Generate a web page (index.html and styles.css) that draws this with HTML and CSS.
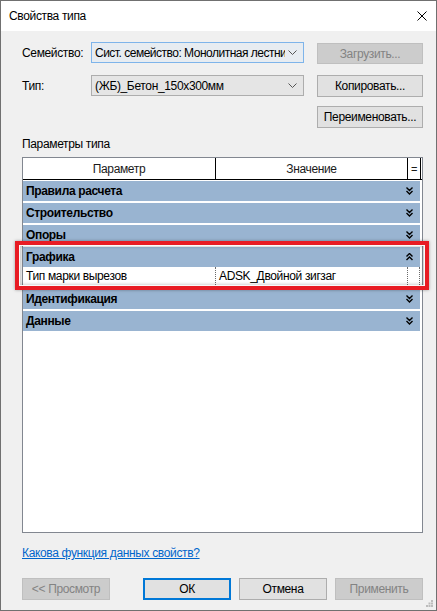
FILE: index.html
```html
<!DOCTYPE html>
<html lang="ru">

<head>
  <meta charset="UTF-8">
  <title>Свойства типа</title>
  <link rel="stylesheet" href="styles.css">
</head>

<body>
  <div class="dialog">
    <div class="titlebar">
      <span class="title">Свойства типа</span>
      <svg class="close" width="10" height="10" viewBox="0 0 10 10">
        <path d="M0.5 0.5 L9.5 9.5 M9.5 0.5 L0.5 9.5" stroke="#000" stroke-width="1" fill="none" />
      </svg>
    </div>

    <div class="content">
      <div class="top-grid">
        <label class="field-label">Семейство:</label>
        <div class="combo combo-focus">
          <span class="combo-text">Сист. семейство: Монолитная лестни</span>
          <svg class="combo-arrow" width="9" height="5" viewBox="0 0 9 5">
            <path d="M0.5 0.5 L4.5 4.5 L8.5 0.5" stroke="#555" stroke-width="1" fill="none" />
          </svg>
        </div>
        <button class="btn btn-disabled btn-first">Загрузить...</button>

        <label class="field-label">Тип:</label>
        <div class="combo">
          <span class="combo-text">(ЖБ)_Бетон_150x300мм</span>
          <svg class="combo-arrow" width="9" height="5" viewBox="0 0 9 5">
            <path d="M0.5 0.5 L4.5 4.5 L8.5 0.5" stroke="#555" stroke-width="1" fill="none" />
          </svg>
        </div>
        <button class="btn">Копировать...</button>

        <span></span>
        <span></span>
        <button class="btn">Переименовать...</button>
      </div>

      <div class="section-label">Параметры типа</div>

      <div class="props">
        <div class="props-head">
          <div class="head-cell">Параметр</div>
          <div class="head-cell">Значение</div>
          <div class="head-cell head-eq">=</div>
        </div>

        <div class="group">
          <span>Правила расчета</span>
          <svg class="chev" width="7" height="8" viewBox="0 0 7 8"><path d="M0.5 0.5 L3.5 3.5 L6.5 0.5 M0.5 4 L3.5 7 L6.5 4" stroke="#000" stroke-width="1.4" fill="none" /></svg>
        </div>
        <div class="group">
          <span>Строительство</span>
          <svg class="chev" width="7" height="8" viewBox="0 0 7 8"><path d="M0.5 0.5 L3.5 3.5 L6.5 0.5 M0.5 4 L3.5 7 L6.5 4" stroke="#000" stroke-width="1.4" fill="none" /></svg>
        </div>
        <div class="group">
          <span>Опоры</span>
          <svg class="chev" width="7" height="8" viewBox="0 0 7 8"><path d="M0.5 0.5 L3.5 3.5 L6.5 0.5 M0.5 4 L3.5 7 L6.5 4" stroke="#000" stroke-width="1.4" fill="none" /></svg>
        </div>
        <div class="group group-open">
          <span>Графика</span>
          <svg class="chev" width="7" height="8" viewBox="0 0 7 8"><path d="M0.5 3.5 L3.5 0.5 L6.5 3.5 M0.5 7 L3.5 4 L6.5 7" stroke="#000" stroke-width="1.4" fill="none" /></svg>
        </div>
        <div class="param-row">
          <div class="param-cell">Тип марки вырезов</div>
          <div class="param-cell">ADSK_Двойной зигзаг</div>
          <div class="param-cell"></div>
        </div>
        <div class="group">
          <span>Идентификация</span>
          <svg class="chev" width="7" height="8" viewBox="0 0 7 8"><path d="M0.5 0.5 L3.5 3.5 L6.5 0.5 M0.5 4 L3.5 7 L6.5 4" stroke="#000" stroke-width="1.4" fill="none" /></svg>
        </div>
        <div class="group">
          <span>Данные</span>
          <svg class="chev" width="7" height="8" viewBox="0 0 7 8"><path d="M0.5 0.5 L3.5 3.5 L6.5 0.5 M0.5 4 L3.5 7 L6.5 4" stroke="#000" stroke-width="1.4" fill="none" /></svg>
        </div>
      </div>

      <a class="help-link" href="#">Какова функция данных свойств?</a>

      <div class="footer">
        <button class="btn btn-disabled">&lt;&lt; Просмотр</button>
        <div class="footer-right">
          <button class="btn btn-default">ОК</button>
          <button class="btn">Отмена</button>
          <button class="btn btn-disabled">Применить</button>
        </div>
      </div>
    </div>

    <div class="highlight"></div>

    <svg class="grip" width="7" height="7" viewBox="0 0 7 7">
      <rect x="5" y="0" width="2" height="2" fill="#bcbcbc" />
      <rect x="2.5" y="2.5" width="2" height="2" fill="#bcbcbc" />
      <rect x="5" y="2.5" width="2" height="2" fill="#bcbcbc" />
      <rect x="0" y="5" width="2" height="2" fill="#bcbcbc" />
      <rect x="2.5" y="5" width="2" height="2" fill="#bcbcbc" />
      <rect x="5" y="5" width="2" height="2" fill="#bcbcbc" />
    </svg>
  </div>
</body>

</html>
```

FILE: styles.css
```css
* {
  box-sizing: border-box;
}

body {
  margin: 0;
  font-family: 'Liberation Sans', Arial, sans-serif;
  font-size: 12px;
  letter-spacing: -0.35px;
  color: #000;
}

.dialog {
  position: relative;
  width: 437px;
  height: 611px;
  border: 1px solid #707070;
  background: #f0f0f0;
  display: flex;
  flex-direction: column;
}

.titlebar {
  height: 30px;
  background: #fff;
  display: flex;
  align-items: center;
  justify-content: space-between;
  padding: 0 9px 0 8px;
}

.title {
  font-size: 12px;
}

.content {
  padding: 11px 13px 0 21px;
  display: flex;
  flex-direction: column;
}

.top-grid {
  display: grid;
  grid-template-columns: 69px 213px 1fr;
  grid-template-rows: 22px 22px 22px;
  row-gap: 11px;
}

.top-grid > :nth-child(n+7) {
  margin-top: -2px;
}

.top-grid .btn {
  width: 106px;
  justify-self: end;
}

.field-label {
  align-self: center;
}

.combo {
  height: 21px;
  border: 1px solid #adadad;
  background: #e5e5e5;
  display: flex;
  align-items: center;
  padding: 0 6px 0 3px;
  overflow: hidden;
}

.combo-focus {
  border-color: #7eb4ea;
  background: #e7ecf1;
  letter-spacing: -0.5px;
}

.combo-text {
  flex: 1;
  white-space: nowrap;
  overflow: hidden;
}

.combo-arrow {
  flex: none;
  margin-left: 3px;
}

.btn {
  height: 22px;
  border: 1px solid #adadad;
  background: #e1e1e1;
  font-family: inherit;
  font-size: 12px;
  letter-spacing: inherit;
  color: #000;
  padding: 0;
}

.btn-first {
  margin-top: 1px;
  height: 21px;
}

.btn-disabled {
  background: #cccccc;
  border-color: #bfbfbf;
  color: #838383;
}

.btn-default {
  border: 2px solid #0078d7;
}

.section-label {
  margin-top: 6px;
  line-height: 16px;
  margin-bottom: 5px;
}

.props {
  height: 376px;
  border: 1px solid #828790;
  background: #fff;
  padding-top: 1px;
}

.props-head {
  display: grid;
  grid-template-columns: 193px 192px 13px;
  height: 22px;
  border-bottom: 1px solid #000;
  margin-top: -1px;
  margin-bottom: 1px;
}

.head-cell {
  display: flex;
  align-items: center;
  justify-content: center;
  border-right: 1px solid #000;
  color: #1a1a1a;
}

.head-eq {
  border-left: 1px solid #000;
  margin-left: -1px;
  font-size: 11px;
}

.group {
  width: 397px;
  height: 20px;
  margin-bottom: 2px;
  background: #99b4d1;
  display: flex;
  align-items: center;
  justify-content: space-between;
  padding: 0 7px 0 3px;
  font-weight: bold;
}

.group-open {
  margin-bottom: 0;
}

.param-row {
  display: grid;
  grid-template-columns: 193px 192px 12px;
  height: 19px;
  border-bottom: 1px dotted #6a6a6a;
  width: 398px;
  margin-bottom: 3px;
}

.param-cell {
  border-right: 1px dotted #6a6a6a;
  padding-left: 3px;
  line-height: 18px;
  white-space: nowrap;
}

.help-link {
  margin-top: 12px;
  line-height: 16px;
  color: #0066cc;
  align-self: flex-start;
}

.footer {
  margin-top: 17px;
  display: flex;
  justify-content: space-between;
}

.footer .btn {
  width: 88px;
}

.footer-right {
  display: flex;
  gap: 8px;
}

.highlight {
  position: absolute;
  left: 14px;
  top: 240px;
  width: 414px;
  height: 49px;
  border: 4px solid #e81c24;
  box-shadow: 0 0 3px rgba(0, 0, 0, 0.35), inset 0 0 0 1px #fafafa, inset 0 0 3px 2px rgba(0, 0, 0, 0.18);
  pointer-events: none;
}

.grip {
  position: absolute;
  right: 3px;
  bottom: 3px;
}
```
